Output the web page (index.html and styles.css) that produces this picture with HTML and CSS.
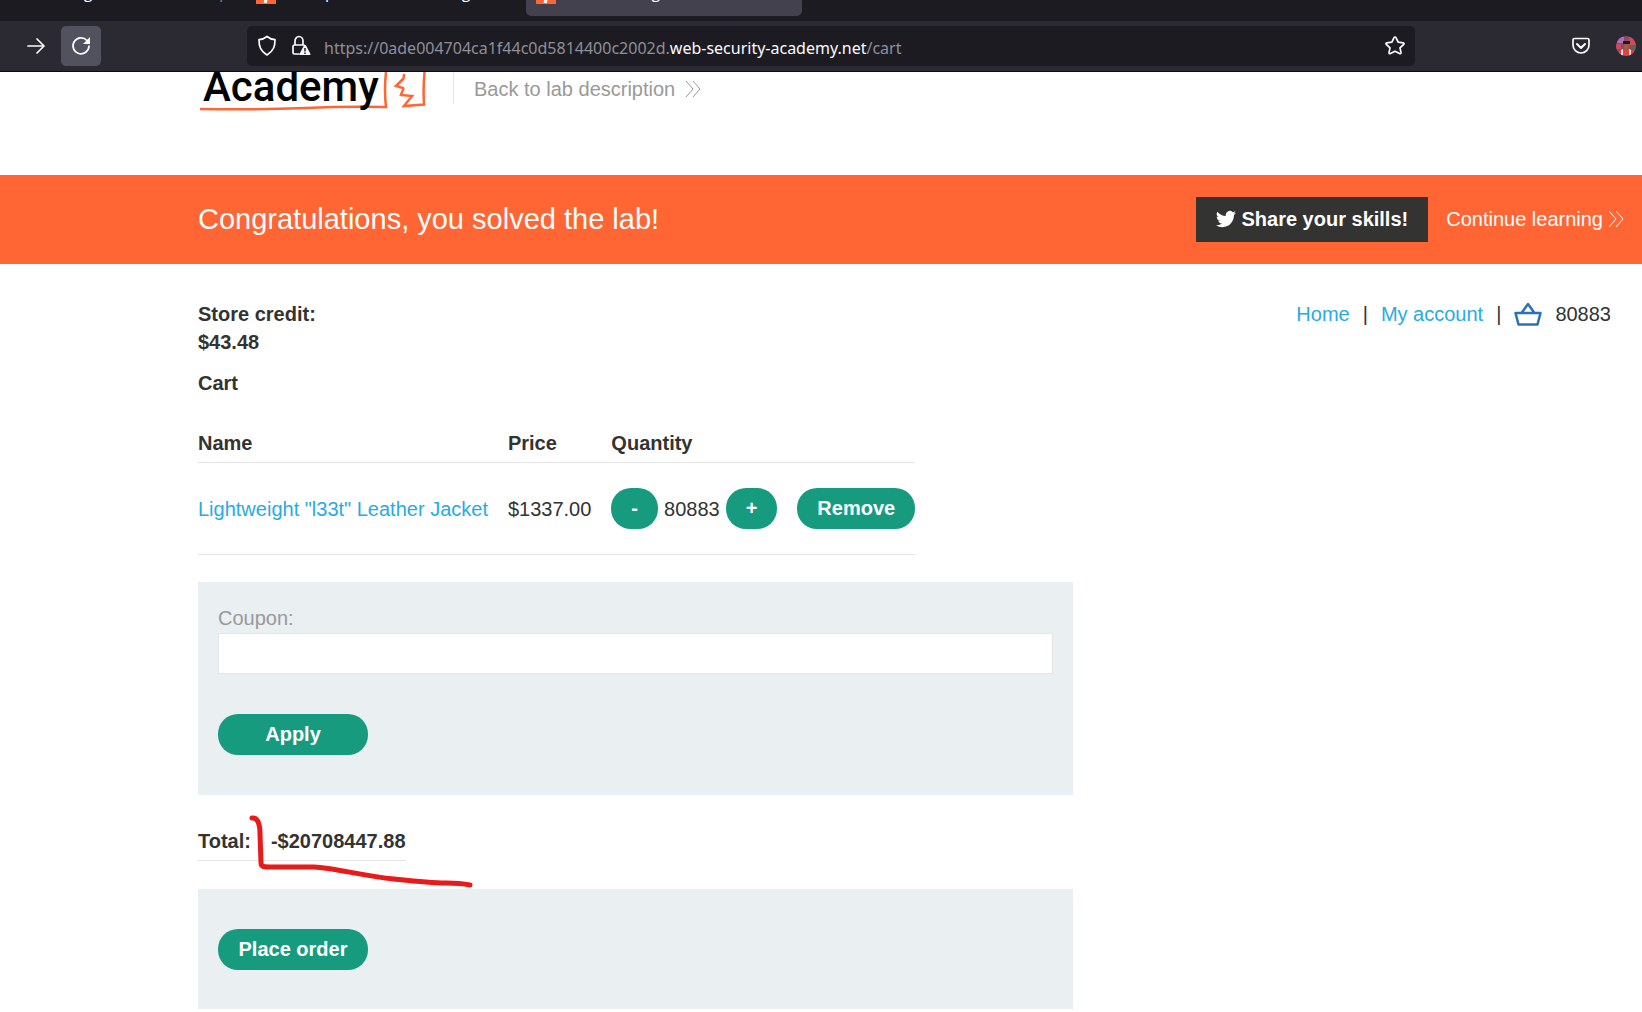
FILE: index.html
```html
<!DOCTYPE html>
<html lang="en">
<head>
<meta charset="utf-8">
<title>Low-level logic flaw</title>
<link rel="stylesheet" href="styles.css">
</head>
<body>
<div class="browser">
  <div class="tabs">
    <div class="tab tab-first"><span class="tab-title">Business logic vulnerabilities <span class="dim">|</span></span></div>
    <div class="tab">
      <svg class="favicon" width="20" height="20" viewBox="0 0 20 20" aria-hidden="true"><rect width="20" height="20" fill="#ff6633"/><path d="M11 2 7 9h5l-3 10" fill="none" stroke="#fff" stroke-width="3"/></svg>
      <span class="tab-title">Examples of business logic</span>
    </div>
    <div class="tab tab-active">
      <svg class="favicon" width="20" height="20" viewBox="0 0 20 20" aria-hidden="true"><rect width="20" height="20" fill="#ff6633"/><path d="M11 2 7 9h5l-3 10" fill="none" stroke="#fff" stroke-width="3"/></svg>
      <span class="tab-title">Low-level logic flaw</span>
    </div>
    <button class="new-tab" aria-label="New tab"><svg width="20" height="20" viewBox="0 0 20 20"><path d="M10 1v18M1 10h18" stroke="#fbfbfe" stroke-width="2"/></svg></button>
  </div>
  <div class="toolbar">
    <button class="tool" aria-label="Forward"><svg width="20" height="20" viewBox="0 0 20 20"><path d="M2 10h16M11 3l7 7-7 7" class="line thin"/></svg></button>
    <button class="tool tool-on" aria-label="Reload"><svg width="20" height="20" viewBox="0 0 20 20"><path d="M16 4.500A8 8 0 1 0 18 10" class="line thin"/><path d="M19 1v7h-7z" fill="#fbfbfe"/></svg></button>
    <div class="address">
      <svg width="20" height="22" viewBox="0 0 20 22" aria-hidden="true"><path d="M10 1.500c2.500 2 5 3 8 3.200 0 6-1 11-8 15.300C3 15.700 2 10.700 2 4.700c3-.2 5.500-1.200 8-3.200z" class="line thin"/></svg>
      <svg class="lock" width="20" height="22" viewBox="0 0 20 22" aria-hidden="true"><path d="M8 19H3.500Q2 19 2 17.500v-6Q2 10 3.500 10h9q1.500 0 1.500 1M4 10V6a4 4.500 0 0 1 8 0v4" class="line thin"/><path d="M14 10q.8 0 1.200.8l4.300 8.200q.4 1-.8 1H9.300q-1.200 0-.8-1l4.300-8.200q.4-.8 1.200-.8z" fill="#fbfbfe"/><path d="M14 13v3.500M14 17.500v1.500" stroke="#1c1b22" stroke-width="1.500"/></svg>
      <span class="url">https://0ade004704ca1f44c0d5814400c2002d.<span class="host">web-security-academy.net</span>/cart</span>
      <button class="star" aria-label="Bookmark this page"><svg width="22" height="22" viewBox="0 0 22 22"><path d="M11 2q.8 0 1.100.8l2 4.400 5 .6q1.600.4.500 1.700l-3.600 3.300 1 4.800q.1 1.600-1.400 1L11 16.200l-4.600 2.400q-1.500.6-1.400-1l1-4.800L2.400 9.500Q1.300 8.200 2.900 7.800l5-.6 2-4.400Q10.200 2 11 2z" class="line thin"/></svg></button>
    </div>
    <div class="extras">
      <button class="icon" aria-label="Save to Pocket"><svg width="20" height="20" viewBox="0 0 20 20"><path d="M3.500 2.500h13q1.500 0 1.500 1.500v5a8 8 0 0 1-16 0V4q0-1.500 1.500-1.500z" class="line thin"/><path d="m6 8 4 4 4-4" class="line"/></svg></button>
      <button class="icon" aria-label="Account"><svg width="20" height="20" viewBox="0 0 20 20"><clipPath id="face"><circle cx="10" cy="10" r="10"/></clipPath><g clip-path="url(#face)"><path fill="#8d4a68" d="M0 0h20v20H0z"/><path fill="#b06cc0" d="M1 1h7v6H1z"/><path fill="#cf4a5a" d="M13 1h7v8h-7zM0 8h5v5H0z"/><path fill="#4c6a60" d="M15 9h5v4h-5z"/><path fill="#e3423c" d="M3 20v-5l4-2h7l4 2v5z"/><path fill="#f2dfe0" d="m5 14 2-1v7H5zM13 13l2 1v6h-2z"/><path fill="#9b5c48" d="M8 8h5v5l-2 3-3-3z"/><path fill="#21171c" d="M7 5h7v3H7z"/></g></svg></button>
    </div>
  </div>
</div>

<header class="site-head">
  <div class="logo">
    <span class="logo-text">Academy</span>
    <svg class="logo-mark" width="230" height="44" viewBox="0 0 230 44" aria-hidden="true"><path d="M188 0q-2 18 0 35-40-1-80 1-50 2-106 1" fill="none" stroke="#ff6633" stroke-width="2.500"/><path d="M206 2q0 4-1 5l-7 7 7 2q1 1-1 4l-1 3 11 1-8 10 20-1.500q-1-16 .500-32.500" fill="none" stroke="#ff6633" stroke-width="2.500"/></svg>
  </div>
  <a class="back" href="#">Back to lab description
    <svg width="16" height="18" viewBox="0 0 16 18" aria-hidden="true"><path d="m1 1 7 8-7 8M8 1l7 8-7 8" fill="none" stroke="#999" stroke-width="1"/></svg>
  </a>
</header>

<section class="banner">
  <h1>Congratulations, you solved the lab!</h1>
  <button class="share"><svg width="20" height="18" viewBox="0 0 24 20" aria-hidden="true"><path fill="#fff" d="M23.950 2.600a10 10 0 0 1-2.820.770 5 5 0 0 0 2.160-2.720 10 10 0 0 1-3.120 1.190 4.920 4.920 0 0 0-8.380 4.480A13.900 13.900 0 0 1 1.640 1.160a4.900 4.900 0 0 0 1.520 6.570 4.900 4.900 0 0 1-2.230-.610 4.920 4.920 0 0 0 3.950 4.880 5 5 0 0 1-2.210.080 4.940 4.940 0 0 0 4.600 3.420A9.900 9.900 0 0 1 0 17.540a14 14 0 0 0 7.550 2.210c9.050 0 14-7.500 14-13.980v-.640a10 10 0 0 0 2.400-2.530z"/></svg>Share your skills!</button>
  <a class="continue" href="#">Continue learning
    <svg width="16" height="18" viewBox="0 0 16 18" aria-hidden="true"><path d="m1 1 7 8-7 8M8 1l7 8-7 8" fill="none" stroke="#fff" stroke-width="1"/></svg>
  </a>
</section>

<main class="shop">
  <div class="top">
    <p class="credit"><strong>Store credit:<br>$43.48</strong></p>
    <nav class="links">
      <a href="#">Home</a><span>|</span><a href="#">My account</a><span>|</span>
      <a class="basket" href="#" aria-label="Basket"><svg width="28" height="26" viewBox="0 0 28 26"><path d="M1.500 12h25l-3 11.500h-19zM7.500 12 14 3l6.500 9" fill="none" stroke="#2c71b8" stroke-width="2.500" stroke-linejoin="round"/></svg></a>
      <span class="count">80883</span>
    </nav>
  </div>
  <h2>Cart</h2>
  <table class="items">
    <thead><tr><th>Name</th><th>Price</th><th>Quantity</th><th></th></tr></thead>
    <tbody><tr>
      <td><a href="#">Lightweight "l33t" Leather Jacket</a></td>
      <td>$1337.00</td>
      <td><div class="qty"><button class="btn">-</button><span>80883</span><button class="btn">+</button></div></td>
      <td><button class="btn">Remove</button></td>
    </tr></tbody>
  </table>
  <form class="panel">
    <label for="coupon">Coupon:</label>
    <input id="coupon" type="text">
    <button class="btn wide" type="button">Apply</button>
  </form>
  <div class="sum">
    <table class="total"><tbody><tr><th>Total:</th><th>-$20708447.88</th></tr></tbody></table>
    <svg class="scribble" width="230" height="80" viewBox="0 0 230 80" aria-hidden="true"><path d="M6 6c6-1 8 7 8 16l1 29c0 4 3 4 11 4h42c20 1 50 9 80 12 18 2 34 4 52 4q14 0 24 2" fill="none" stroke="#e81a1a" stroke-width="5" stroke-linecap="round" stroke-linejoin="round"/></svg>
  </div>
  <form class="panel order">
    <button class="btn wide" type="button">Place order</button>
  </form>
</main>
</body>
</html>
```
FILE: styles.css
```css
* { box-sizing: border-box; }
body {
  margin: 0;
  background: #fff;
  color: #333332;
  font: 20px/28px "Liberation Sans", Arial, sans-serif;
}
button {
  margin: 0;
  padding: 0;
  border: 0;
  background: none;
  color: inherit;
  font: inherit;
}
svg { display: block; flex: none; }
a { color: #29abe2; text-decoration: none; }
h1, h2, p { margin: 0; }
.line {
  fill: none;
  stroke: #fbfbfe;
  stroke-width: 2;
  stroke-linecap: round;
  stroke-linejoin: round;
}
.thin { stroke-width: 1.7; }

/* Browser window */
.browser {
  border-bottom: 1px solid #0c0c0d;
  background: #2b2a33;
  color: #fbfbfe;
  font: 16px/24px "Noto Sans", "Open Sans", sans-serif;
}
.tabs {
  display: flex;
  align-items: flex-end;
  height: 21px;
  overflow: hidden;
  background: #1c1b22;
  font-family: "Open Sans", "Noto Sans", sans-serif;
}
.tab {
  display: flex;
  flex: none;
  align-items: flex-end;
  gap: 8px;
  width: 276px;
  height: 44px;
  margin-right: 4px;
  margin-bottom: 5px;
  padding: 0 10px 12px;
  border-radius: 5px;
  white-space: nowrap;
}
.tab-first { width: 242px; padding-left: 0; }
.tab-active { background: #42414d; }
.dim { opacity: .5; }
.new-tab { align-self: flex-end; margin: 0 18px; padding-bottom: 20px; }
.toolbar {
  display: flex;
  align-items: center;
  padding: 5px 6px 5px 16px;
}
.tool {
  display: grid;
  place-items: center;
  width: 40px;
  height: 40px;
  margin-right: 5px;
  border-radius: 5px;
}
.tool-on { background: #52515e; }
.address {
  display: flex;
  flex: 1;
  align-items: center;
  height: 40px;
  margin-left: 141px;
  padding: 0 9px 0 10px;
  border-radius: 5px;
  background: #1c1b22;
}
.lock { margin: 0 13px 0 14px; }
.url { flex: 1; padding-top: 3px; color: #8f8f98; white-space: nowrap; }
.host { color: #fbfbfe; }
.extras { display: flex; gap: 25px; margin-left: 156px; }

/* Academy header */
.site-head {
  display: flex;
  align-items: flex-start;
  height: 103px;
  padding-left: 198px;
}
.logo { position: relative; width: 256px; height: 32px; border-right: 1px solid #e5e5e5; }
.logo-text {
  display: block;
  height: 44px;
  padding-left: 5px;
  overflow: hidden;
  color: #000;
  font: 500 42px/30px Roboto, sans-serif;
}
.logo-mark { position: absolute; top: 0; left: 0; z-index: -1; }
.back {
  display: flex;
  align-items: center;
  gap: 10px;
  margin-left: 20px;
  padding-top: 3px;
  color: #999;
}

/* Solved banner */
.banner {
  display: flex;
  align-items: center;
  height: 89px;
  padding: 0 18px 0 198px;
  background: #ff6633;
  color: #fff;
}
.banner h1 { flex: 1; padding-bottom: 2px; font-size: 29px; font-weight: 400; }
.share {
  display: flex;
  align-items: center;
  gap: 5px;
  height: 45px;
  padding: 0 20px 2px;
  background: #333332;
  font-weight: 700;
}
.continue {
  display: flex;
  align-items: center;
  gap: 5px;
  margin-left: 18px;
  padding-bottom: 2px;
  color: #fff;
}

/* Cart */
.shop { padding: 36px 31px 3px 198px; }
.top { display: flex; justify-content: space-between; align-items: flex-start; }
.links { display: flex; align-items: center; gap: 13px; }
.count { color: #333332; }
h2 { margin-top: 13px; font-size: 20px; }
table { border-collapse: collapse; }
th { padding: 0; text-align: left; }
.items { margin-top: 27px; }
.items th { padding: 5px 20px 5px 0; border-bottom: 1px solid #e5e5e5; }
.items td { padding: 25px 20px 25px 0; border-bottom: 1px solid #e5e5e5; }
.items th:last-child, .items td:last-child { padding-right: 0; }
.qty { display: flex; align-items: center; gap: 6px; }
.btn {
  display: block;
  height: 41px;
  padding: 0 20px 1px;
  border-radius: 20px;
  background: #179b7f;
  color: #fff;
  font-weight: 700;
}
.wide { width: 150px; }
.panel {
  max-width: 875px;
  margin-top: 27px;
  padding: 22px 20px 40px;
  background: #eaeff2;
}
.panel label { display: block; margin-bottom: 1px; color: #999; }
.panel input {
  display: block;
  width: 100%;
  height: 41px;
  margin-bottom: 40px;
  padding: 0 10px;
  border: 1px solid #e5e5e5;
  background: #fff;
  font: inherit;
}
.order { margin-top: 28px; padding-top: 40px; padding-bottom: 39px; }
.sum { position: relative; margin-top: 32px; }
.total th { padding: 0 0 5px; border-bottom: 1px solid #e5e5e5; }
.total th:first-child { padding-right: 20px; }
.scribble { position: absolute; top: -15px; left: 48px; }
```
